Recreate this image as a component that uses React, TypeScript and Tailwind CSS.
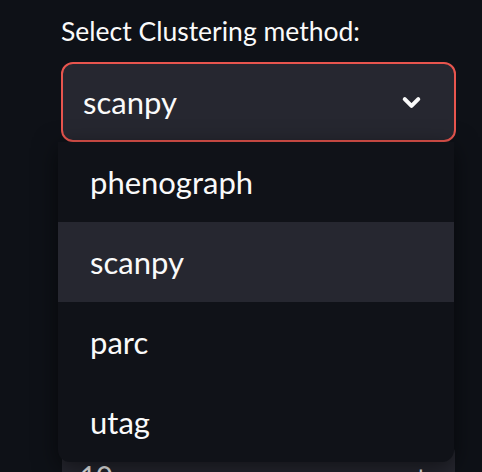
import { ChevronDown } from "lucide-react";

const options = ["phenograph", "scanpy", "parc", "utag"];

export default function App() {
  const selected = "scanpy";

  return (
    <div className="relative h-[472px] w-[482px] overflow-hidden bg-[#0e1117] font-['Lato',sans-serif] text-[#fafafa]">
      <div className="pl-[61px] pr-[26px] pt-[13px]">
        <label className="block h-[36px] text-[26.5px] leading-[36px]">Select Clustering method:</label>

        <div className="relative z-10 mt-[13px]">
          <div className="flex h-[80px] items-center justify-between rounded-[12px] border-2 border-[#e8554e] bg-[#262730] pl-[20px] pr-[29px]">
            <span className="text-[31px]">{selected}</span>
            <ChevronDown className="h-[27px] w-[27px]" strokeWidth={3.6} />
          </div>

          {/* open menu */}
          <ul className="absolute left-[-3px] top-full w-[396px] overflow-hidden rounded-b-[12px] bg-[#101218] shadow-[0_6px_24px_rgba(0,0,0,0.55)]">
            {options.map((o) => (
              <li
                key={o}
                className={`flex h-[80px] items-center pl-[32px] text-[31px] ${o === selected ? "bg-[#262730]" : ""}`}
              >
                {o}
              </li>
            ))}
          </ul>
        </div>

        {/* widgets behind the menu */}
        <div className="h-[303px]" />
        <div className="mx-[1px] flex h-[80px] items-start justify-between rounded-[8px] bg-[#262730] pl-[18px] pr-[26px] pt-[14px] text-[28px] leading-[34px]">
          <span>10</span>
          <span>+</span>
        </div>
      </div>
    </div>
  );
}
